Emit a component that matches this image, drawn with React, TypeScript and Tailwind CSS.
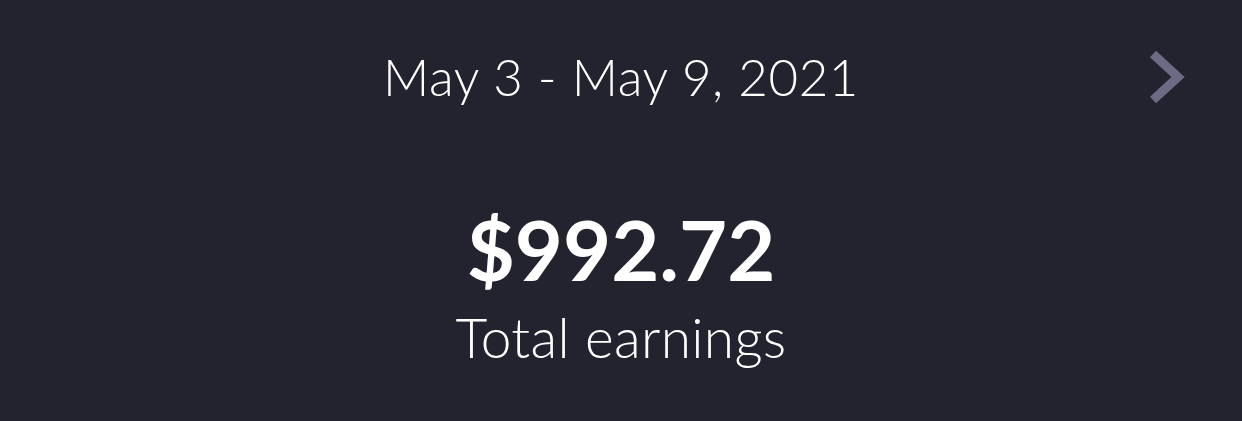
export default function App() {
  return (
    <div
      className="h-[421px] w-full bg-[#23232f] text-white"
      style={{ fontFamily: 'Lato, "Liberation Sans", sans-serif' }}
    >
      <header className="grid grid-cols-[1fr_auto_1fr] items-center pt-[48px]">
        <div />
        <h1 className="text-[51px] font-light leading-[58px] tracking-[0.6px]">May 3 - May 9, 2021</h1>
        <div className="flex justify-end pr-[56px]">
          <button aria-label="Next week" className="text-[#6b6b86]">
            <svg width="38" height="54" viewBox="0 0 38 54" fill="none">
              <path d="M5 4 L30 27 L5 50" stroke="currentColor" strokeWidth="9" strokeLinejoin="miter" />
            </svg>
          </button>
        </div>
      </header>

      <section className="mt-[97px] flex flex-col items-center">
        <p className="text-[83px] font-bold leading-[92px]">$992.72</p>
        <p className="mt-[12px] text-[55px] font-light leading-[60px] tracking-[0.3px]">Total earnings</p>
      </section>
    </div>
  );
}
